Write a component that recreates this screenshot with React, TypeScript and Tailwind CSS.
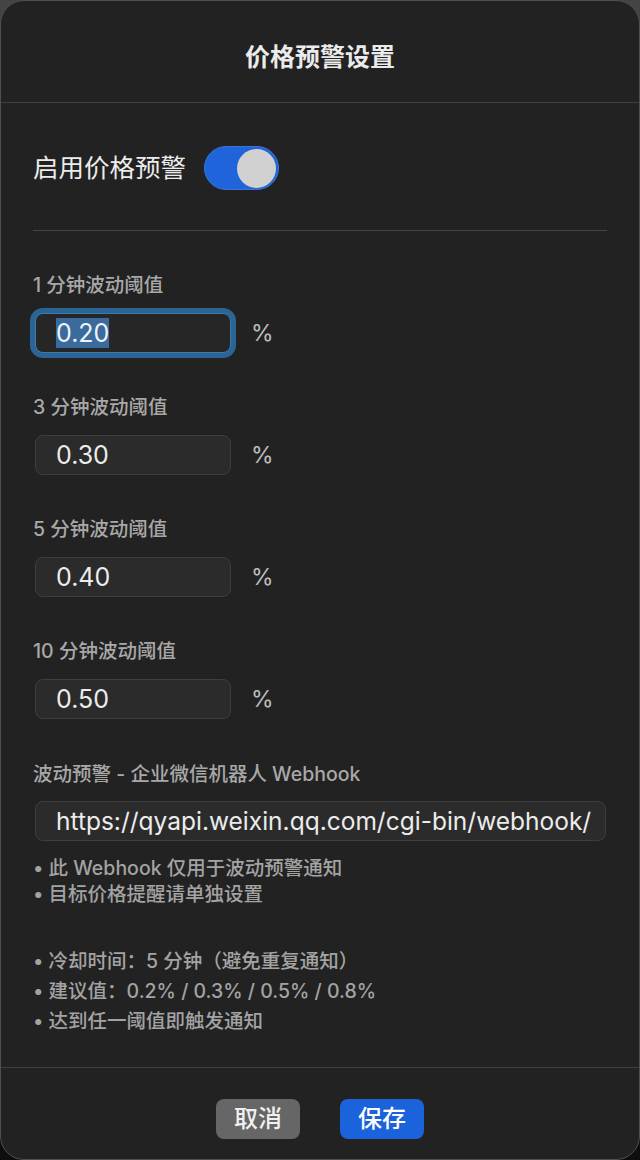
const thresholds = [
  { label: "1 分钟波动阈值", value: "0.20", focused: true },
  { label: "3 分钟波动阈值", value: "0.30" },
  { label: "5 分钟波动阈值", value: "0.40" },
  { label: "10 分钟波动阈值", value: "0.50" },
];

function Toggle() {
  return (
    <div className="flex h-[44px] w-[75px] items-center justify-end rounded-full border border-[#3d73d6] bg-[#1f64db] pr-[2px]">
      <div className="size-[39px] rounded-full bg-[#d1d1d1]" />
    </div>
  );
}

function ThresholdField({ label, value, focused }: { label: string; value: string; focused?: boolean }) {
  return (
    <div className="flex flex-col gap-4">
      <div className="text-[19.5px] font-medium leading-6 text-[#a8a8a8]">{label}</div>
      <div className="flex items-center gap-5">
        <div
          className={
            focused
              ? "ml-0.5 flex h-10 w-[196px] items-center rounded-lg border border-[#3a7bb0] bg-[#262626] pl-[20px] shadow-[0_0_0_5px_#2a6596]"
              : "ml-0.5 flex h-10 w-[196px] items-center rounded-lg border border-[#3e3e3e] bg-[#2b2b2b] pl-[20px]"
          }
        >
          <span className={focused ? "bg-[#3b6a9c] text-[25px] leading-[30px] text-[#eef3f8]" : "text-[25px] leading-[30px] text-[#ececec]"}>
            {value}
          </span>
        </div>
        <span className="text-[23px] text-[#bdbdbd]">%</span>
      </div>
    </div>
  );
}

export default function App() {
  return (
    <div className="h-[1160px] w-[640px] bg-gradient-to-b from-[#444] to-[#0e0e0e] font-[Inter,'Noto_Sans_CJK_SC',sans-serif]">
      <div className="flex h-full flex-col overflow-hidden rounded-[24px] border border-[#4f4f4f] bg-[#222222]">
        <div className="flex h-[102px] shrink-0 items-center justify-center border-b border-[#3f3f3f] pt-3">
          <h1 className="text-[25px] font-bold text-[#ebebeb]">价格预警设置</h1>
        </div>

        <div className="flex flex-1 flex-col px-8">
          <div className="mt-[43px] flex items-center gap-[18px]">
            <span className="text-[25.5px] text-[#ececec]">启用价格预警</span>
            <Toggle />
          </div>

          <div className="mt-[40px] h-px bg-[#444]" />

          <div className="mt-[42px] flex flex-col gap-[42px]">
            {thresholds.map((t) => (
              <ThresholdField key={t.label} {...t} />
            ))}
          </div>

          <div className="mt-[43px] text-[19.5px] font-medium leading-6 text-[#a8a8a8]">波动预警 - 企业微信机器人 Webhook</div>
          <div className="ml-0.5 mt-[15px] flex h-10 w-[571px] items-center rounded-lg border border-[#3e3e3e] bg-[#2b2b2b] pl-[20px] pr-[14px]">
            <span className="overflow-hidden whitespace-nowrap text-[24.5px] text-[#ececec]">https://qyapi.weixin.qq.com/cgi-bin/webhook/send?key=</span>
          </div>

          <div className="mt-[14px] flex flex-col text-[19.5px] font-medium leading-[26px] text-[#a3a3a3]">
            <span>• 此 Webhook 仅用于波动预警通知</span>
            <span>• 目标价格提醒请单独设置</span>
          </div>

          <div className="mt-[39px] flex flex-col text-[19.5px] font-medium leading-[30px] text-[#a3a3a3]">
            <span>• 冷却时间：5 分钟（避免重复通知）</span>
            <span>• 建议值：0.2% / 0.3% / 0.5% / 0.8%</span>
            <span>• 达到任一阈值即触发通知</span>
          </div>
        </div>

        <div className="flex h-[92px] shrink-0 justify-center gap-10 border-t border-[#3f3f3f] pt-[31px]">
          <button className="h-10 w-[84px] rounded-lg bg-[#666] text-[24px] font-medium text-[#f0f0f0]">取消</button>
          <button className="h-10 w-[84px] rounded-lg bg-[#1b63da] text-[24px] font-medium text-white">保存</button>
        </div>
      </div>
    </div>
  );
}
